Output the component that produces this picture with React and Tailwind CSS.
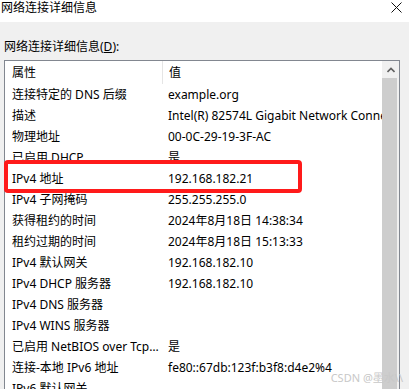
import React from 'react';

const rows = [
	['连接特定的 DNS 后缀', 'example.org'],
	['描述', 'Intel(R) 82574L Gigabit Network Connection'],
	['物理地址', '00-0C-29-19-3F-AC'],
	['已启用 DHCP', '是'],
	['IPv4 地址', '192.168.182.21'],
	['IPv4 子网掩码', '255.255.255.0'],
	['获得租约的时间', '2024年8月18日 14:38:34'],
	['租约过期的时间', '2024年8月18日 15:13:33'],
	['IPv4 默认网关', '192.168.182.10'],
	['IPv4 DHCP 服务器', '192.168.182.10'],
	['IPv4 DNS 服务器', ''],
	['IPv4 WINS 服务器', ''],
	['已启用 NetBIOS over Tcpip', '是'],
	['连接-本地 IPv6 地址', 'fe80::67db:123f:b3f8:d4e2%4'],
	['IPv6 默认网关', ''],
];

export default function App() {
	return (
		<div
			className="relative w-[409px] h-[389px] overflow-hidden bg-[#f0f0f0] text-[12px] text-black"
			style={{fontFamily: '"Noto Sans", "Noto Sans CJK SC", sans-serif'}}
		>
			{/* title bar */}
			<div className="h-[22px] bg-white flex items-start justify-between">
				<span className="pl-[1px] leading-[16px]">网络连接详细信息</span>
				<svg width="11" height="11" viewBox="0 0 11 11" className="mt-[2px] mr-[7px]">
					<path d="M0.5 0.5L10.5 10.5M10.5 0.5L0.5 10.5" stroke="#111" strokeWidth="1" />
				</svg>
			</div>

			<div className="pl-[4px] pt-[17px] h-[38px] leading-[16px]">
				网络连接详细信息(<span className="underline">D</span>):
			</div>

			{/* list box */}
			<div className="ml-[4px] w-[396px] h-[340px] border border-[#828790] bg-white flex">
				<div className="flex-1 min-w-0 overflow-hidden">
					<div className="flex h-[23px] items-center">
						<div className="w-[157px] shrink-0 pl-[7px] leading-[16px]">属性</div>
						<div className="w-px shrink-0 h-[23px] bg-[#e5e5e5]"></div>
						<div className="pl-[6px] leading-[16px]">值</div>
					</div>
					{rows.map(([k, v]) => (
						<div key={k} className="flex h-[21px] items-center whitespace-nowrap">
							<div className="w-[158px] shrink-0 pl-[7px] pr-[4px] truncate leading-[16px]">{k}</div>
							<div className="shrink-0 pl-[5px] leading-[16px]">{v}</div>
						</div>
					))}
				</div>
				<div className="w-[17px] shrink-0 flex flex-col bg-[#f0f0f0]">
					<div className="h-[17px] flex items-center justify-center">
						<svg width="8" height="6" viewBox="0 0 8 6">
							<path d="M0.5 5L4 1.5L7.5 5" stroke="#606060" strokeWidth="1.6" fill="none" />
						</svg>
					</div>
					<div className="flex-1 w-[15px] bg-[#cdcdcd]"></div>
				</div>
			</div>

			{/* highlight */}
			<div className="absolute left-[4px] top-[160px] w-[298px] h-[33px] border-[4px] border-[#ff1a1a] rounded-[4px]"></div>

			<div className="absolute right-[6px] bottom-[4px] text-[11px] leading-[14px] text-[#c8c8c8]">
				CSDN @墨水\\
			</div>
		</div>
	);
}
